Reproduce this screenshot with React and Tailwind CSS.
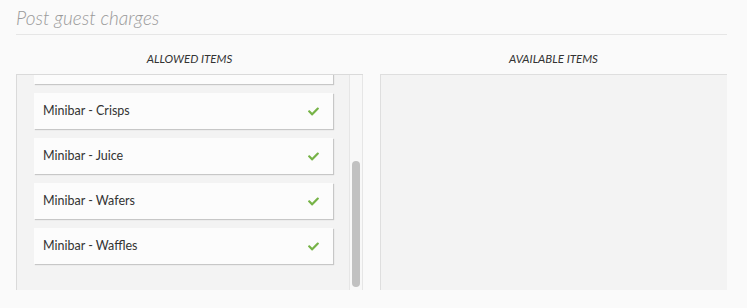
import React from "react";
import { FaCheck } from "react-icons/fa";

const items = ["Minibar - Crisps", "Minibar - Juice", "Minibar - Wafers", "Minibar - Waffles"];

function Card({ label, className = "" }) {
  return (
    <div className={"h-[36px] shrink-0 bg-[#fcfcfc] shadow-[1px_1px_1px_rgba(0,0,0,0.18)] flex items-center justify-between pl-[9px] pr-[14px] " + className}>
      {label ? <span className="text-[12.5px] text-[#333]">{label}</span> : <span />}
      {label ? <FaCheck className="text-[#76b347] w-[11px] h-[11px]" /> : null}
    </div>
  );
}

export default function App() {
  return (
    <div className="min-h-[308px] bg-[#fafafa] pl-4 pr-5 font-['Lato','Noto_Sans',sans-serif]">
      <div className="h-[35px] border-b border-[#e6e6e6] pt-[6px]">
        <h1 className="text-[19px] leading-6 italic font-light text-[#999]">Post guest charges</h1>
      </div>
      <div className="grid grid-cols-2 gap-[17px]">
        <div className="flex flex-col">
          <div className="h-[39px] pt-[9px] flex items-center justify-center text-[11.5px] italic text-[#333]">ALLOWED ITEMS</div>
          <div className="h-[216px] flex border-l border-t border-[#dadada] bg-[#f3f3f3]">
            <div className="flex-1 overflow-hidden pl-[17px] pr-[16px] flex flex-col gap-[9px]">
              <Card label="" className="-mt-[27px]" />
              {items.map((it) => (
                <Card key={it} label={it} />
              ))}
            </div>
            <div className="w-[14px] border-l border-r border-[#e6e6e6] bg-[#f8f8f8] flex justify-center">
              <div className="w-[8px] h-[126px] mt-[86px] rounded-full bg-[#c1c1c1]" />
            </div>
          </div>
        </div>
        <div className="flex flex-col">
          <div className="h-[39px] pt-[9px] flex items-center justify-center text-[11.5px] italic text-[#333]">AVAILABLE ITEMS</div>
          <div className="h-[216px] border-t border-l border-[#dedede] bg-[#f3f3f3]" />
        </div>
      </div>
    </div>
  );
}
